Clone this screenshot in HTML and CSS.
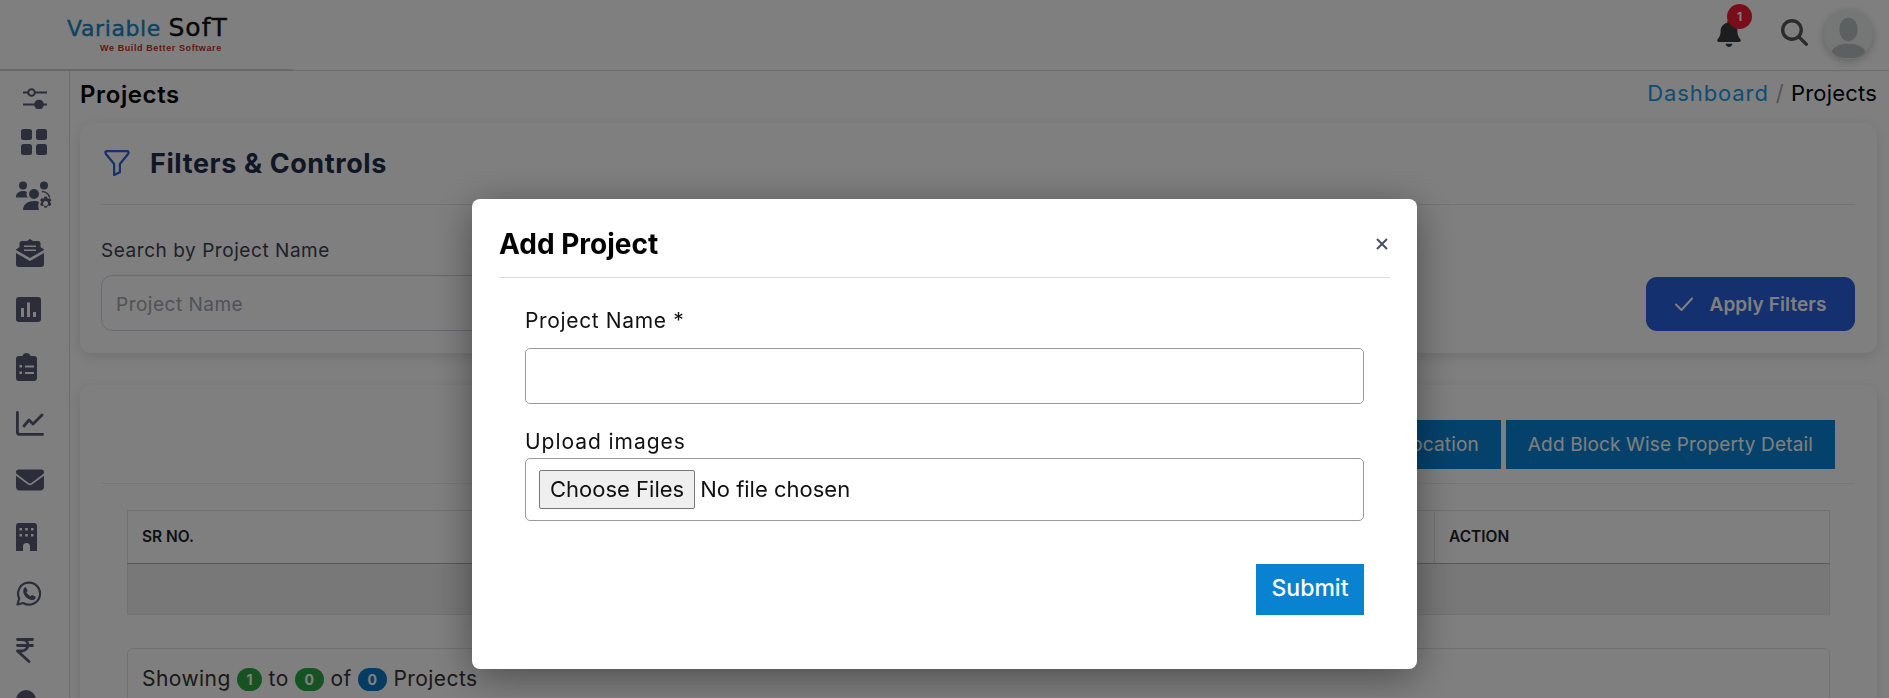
FILE: index.html
```html
<!DOCTYPE html>
<html lang="en">
<head>
<meta charset="utf-8">
<title>Projects</title>
<link rel="stylesheet" href="styles.css">
</head>
<body>
<div class="app">
  <header class="topbar">
    <div class="brand">
      <div class="logo"><span class="logo-a">Variable</span> <span class="logo-b">SofT</span></div>
      <div class="tagline">We Build Better Software</div>
    </div>
    <div class="top-actions">
      <div class="bell">
        <svg class="bell-ic" viewBox="0 0 448 512"><path d="M224 0c-17.7 0-32 14.3-32 32V51.2C119 66 64 130.6 64 208v18.8c0 47-17.3 92.4-48.5 127.6l-7.4 8.3c-8.4 9.4-10.4 22.9-5.3 34.4S19.4 416 32 416H416c12.6 0 24-7.4 29.2-18.9s3.1-25-5.3-34.4l-7.4-8.3C401.3 319.2 384 273.9 384 226.8V208c0-77.4-55-142-128-156.8V32c0-17.7-14.3-32-32-32zm45.3 493.3c12-12 18.7-28.3 18.7-45.3H224 160c0 17 6.7 33.3 18.7 45.3s28.3 18.7 45.3 18.7s33.3-6.7 45.3-18.7z"/></svg>
        <span class="bell-badge">1</span>
      </div>
      <svg class="search-ic" viewBox="0 0 512 512"><path d="M416 208c0 45.9-14.9 88.3-40 122.7L502.6 457.4c12.5 12.5 12.5 32.8 0 45.3s-32.8 12.5-45.3 0L330.7 376c-34.4 25.2-76.8 40-122.7 40C93.1 416 0 322.9 0 208S93.1 0 208 0S416 93.1 416 208zM208 352a144 144 0 1 0 0-288 144 144 0 1 0 0 288z"/></svg>
      <div class="avatar">
        <svg viewBox="0 0 48 48"><ellipse cx="24" cy="19" rx="9" ry="11.500"/><path d="M7 42c2-7 9-9 17-9s15 2 17 9c-4 4-10 5-17 5s-13-1-17-5z"/></svg>
      </div>
    </div>
  </header>

  <div class="body-row">
    <nav class="sidebar">
      <div class="nav-row nav-sliders">
        <svg class="ic-sliders" viewBox="0 0 24 21"><g fill="none"><circle cx="8.500" cy="4.500" r="3.300"/><path d="M12 4.500h12M0 4.500h5"/><path d="M0 16.500h24"/></g><circle cx="16" cy="16.500" r="4.800" class="solid"/></svg>
      </div>
      <div class="nav-row nav-grid">
        <svg class="ic-grid" viewBox="0 0 26 26"><rect width="11" height="11" rx="2.500"/><rect x="15" width="11" height="11" rx="2.500"/><rect y="15" width="11" height="11" rx="2.500"/><rect x="15" y="15" width="11" height="11" rx="2.500"/></svg>
      </div>
      <div class="nav-row">
        <svg class="ic-users" viewBox="0 0 36 30"><circle cx="7" cy="4.500" r="4"/><circle cx="28" cy="4.500" r="4"/><path d="M0 16c0-3.500 3-6 7-6 2 0 3 .5 4 1-1 2-.5 4 1 5.500H0z"/><circle cx="18" cy="13" r="5"/><path d="M7 29c0-5 4-9 11-9 3 0 4 .5 5 1-1 3-1 5 0 8H7z"/><path d="M26 10.500c3 0 7 2 7.500 6" fill="none"/><path d="M28.500 15.500l2.500.2.800 2.100 2.300-.6 1.300 2.100-1.500 1.800 1.500 1.800-1.300 2.100-2.300-.6-.8 2.100-2.500.2-.8-2.300-2.300.6-1.300-2.100 1.500-1.800-1.500-1.800 1.300-2.100 2.300.6zM29.500 20a2.500 2.500 0 1 0 .1 0z" fill-rule="evenodd"/></svg>
      </div>
      <div class="nav-row">
        <svg class="ic-mailopen" viewBox="0 0 28 28"><path d="M14 0l3 2h5a2.500 2.500 0 0 1 2.500 2.500V8L28 10.500v.5L14 19 0 11v-.5L3.500 8V4.500A2.500 2.500 0 0 1 6 2h5z M8 6.500v1.500h12V6.500z M8 10.500V12h12v-1.500z" fill-rule="evenodd"/><path d="M0 14l14 8 14-8v11a3 3 0 0 1-3 3H3a3 3 0 0 1-3-3z"/></svg>
      </div>
      <div class="nav-row">
        <svg class="ic-chart" viewBox="0 0 25 25"><path fill-rule="evenodd" d="M3 0h19a3 3 0 0 1 3 3v19a3 3 0 0 1-3 3H3a3 3 0 0 1-3-3V3a3 3 0 0 1 3-3zM5 11v9h3v-9zM11 5.500V20h3V5.500zM17 15v5h3v-5z"/></svg>
      </div>
      <div class="nav-row">
        <svg class="ic-clip" viewBox="0 0 21 28"><path fill-rule="evenodd" d="M10.500 0c2 0 3.500 1.300 4 3H18a3 3 0 0 1 3 3v19a3 3 0 0 1-3 3H3a3 3 0 0 1-3-3V6a3 3 0 0 1 3-3h3.500c.5-1.700 2-3 4-3zM9 12.500v2h9v-2zM9 19v2h9v-2zM3.500 12v2.500H6V12zM3.500 18.500V21H6v-2.500z"/></svg>
      </div>
      <div class="nav-row">
        <svg class="ic-line" viewBox="0 0 28 25"><path fill="none" stroke-linecap="round" stroke-linejoin="round" d="M1.400 1.400v19.500a2.500 2.500 0 0 0 2.500 2.500h22.700M8 15l5-6 4 4 9-9"/></svg>
      </div>
      <div class="nav-row">
        <svg class="ic-mail" viewBox="0 0 512 512"><path d="M48 64C21.500 64 0 85.500 0 112c0 15.100 7.100 29.300 19.200 38.400L236.800 313.600c11.400 8.500 27 8.500 38.400 0L492.800 150.400c12.100-9.100 19.200-23.300 19.200-38.400c0-26.500-21.500-48-48-48H48zM0 176V384c0 35.300 28.700 64 64 64H448c35.300 0 64-28.700 64-64V176L294.400 339.200c-22.800 17.100-54 17.100-76.800 0L0 176z"/></svg>
      </div>
      <div class="nav-row">
        <svg class="ic-build" viewBox="0 0 21 28"><path fill-rule="evenodd" d="M3 0h15a3 3 0 0 1 3 3v25h-7v-4.500a3.500 3.500 0 0 0-7 0V28H0V3a3 3 0 0 1 3-3zM3.500 5v2.500h2.500V5zM9.200 5v2.500h2.600V5zM15 5v2.500h2.500V5zM3.500 11v2.500h2.500V11zM9.200 11v2.500h2.600V11zM15 11v2.500h2.500V11z"/></svg>
      </div>
      <div class="nav-row">
        <svg class="ic-wa" viewBox="0 0 25 25"><path fill="none" stroke-linejoin="round" d="M1.500 23.500l1.700-6A11 11 0 1 1 7.300 22z"/><path d="M8.500 6.500l1.500-.300 1.700 3.500-1.200 1.600c.9 1.800 2.300 3.100 4 4l1.600-1.400 3.400 1.700v1.500c-.6 1.700-2.400 2.300-4.200 1.900-4.200-1-7.700-4.500-8-8.300-.1-1.800.4-3.200 1.200-4.200z"/></svg>
      </div>
      <div class="nav-row">
        <svg class="ic-rupee" viewBox="0 0 18 25"><path fill="none" stroke-linecap="round" stroke-linejoin="round" d="M1.500 1.500h15M1.500 7.500h15M6 1.500c4 0 6 2.500 6 5.500s-3 6-6 6H1.500L13 23.500"/></svg>
      </div>
      <div class="nav-row nav-last">
        <svg class="ic-last" viewBox="0 0 24 24"><circle cx="12" cy="12" r="12"/></svg>
      </div>
    </nav>

    <main class="content">
      <div class="title-row">
        <h1 class="page-title">Projects</h1>
        <div class="crumbs"><a class="crumb-link">Dashboard</a><span class="crumb-sep">/</span><span>Projects</span></div>
      </div>

      <section class="card card-filters">
        <div class="filter-head">
          <svg class="ic-funnel" viewBox="0 0 28 28"><path fill="none" stroke-linejoin="round" d="M2 2.500c0-1 .5-1.300 1.500-1.300h21c1 0 1.500.4 1.500 1.300 0 1-.5 1.600-1 2.200L17 14.500v8.500l-6 3V14.500L3 4.700c-.5-.6-1-1.200-1-2.200z"/></svg>
          <h2 class="filter-title">Filters &amp; Controls</h2>
        </div>
        <div class="filter-row">
          <div class="field">
            <label class="filter-label">Search by Project Name</label>
            <input class="filter-input" placeholder="Project Name">
          </div>
          <button class="apply-btn">
            <svg viewBox="0 0 20 16"><path fill="none" stroke-linecap="round" stroke-linejoin="round" d="M2 8.500l5.500 5.500L18 2.500"/></svg>
            Apply Filters
          </button>
        </div>
      </section>

      <section class="card card-table">
        <div class="btn-row">
          <button class="act-btn">Add Location</button>
          <button class="act-btn">Add Block Wise Property Detail</button>
        </div>
        <table class="data-table">
          <thead>
            <tr><th class="col-sr">SR NO.</th><th>PROJECT NAME</th><th class="col-action">ACTION</th></tr>
          </thead>
          <tbody>
            <tr><td colspan="3">&nbsp;</td></tr>
          </tbody>
        </table>
        <div class="showing">Showing <span class="pill pill-green pill-one">1</span> to <span class="pill pill-green">0</span> of <span class="pill pill-blue">0</span> Projects</div>
      </section>
    </main>
  </div>
</div>

<div class="backdrop">
  <div class="modal">
    <div class="modal-head">
      <h3 class="modal-title">Add Project</h3>
      <svg class="modal-close" viewBox="0 0 12 12"><path fill="none" d="M1 1l10 10M11 1L1 11"/></svg>
    </div>
    <form class="modal-form">
      <label class="form-label form-label-name">Project Name *</label>
      <input class="form-input" type="text">
      <label class="form-label form-label-upload">Upload images</label>
      <input class="form-file" type="file" multiple>
      <div class="form-actions"><button class="submit-btn" type="button">Submit</button></div>
    </form>
  </div>
</div>
</body>
</html>
```
FILE: styles.css
```css
* { box-sizing: border-box; }
html, body { margin: 0; height: 698px; overflow: hidden; }
body { font-family: Inter, "Noto Sans", sans-serif; background: #fff; color: #000; }
h1, h2, h3 { margin: 0; }
svg { display: block; flex: none; }

.app { height: 698px; overflow: hidden; display: flex; flex-direction: column; }

.topbar { height: 71px; flex: none; display: flex; justify-content: space-between; border-bottom: 1px solid #d8d8d8; }
.brand { width: 293px; height: 71px; padding: 15px 0 0 67px; border-bottom: 2px solid #d0d0d0; }
.logo { font-family: "DejaVu Sans", sans-serif; font-size: 22px; line-height: 26px; white-space: nowrap; letter-spacing: 0.6px; -webkit-text-stroke: 0.4px currentColor; }
.logo-a { color: #1b84c4; }
.logo-b { color: #111; font-size: 25px; letter-spacing: 1px; }
.tagline { font-family: "Liberation Sans", sans-serif; font-size: 9px; font-weight: 700; line-height: 10px; margin: 1px 0 0 33px; color: #c9301a; letter-spacing: 0.6px; white-space: nowrap; }

.top-actions { display: flex; align-items: flex-start; padding: 10px 16px 0 0; }
.bell { position: relative; padding-top: 10px; margin-right: 40px; }
.bell-ic { width: 24px; height: 27px; fill: #393b3f; }
.bell-badge { position: absolute; left: 10px; top: -6px; width: 25px; height: 25px; border-radius: 50%; background: #f01c32; color: #fff; font-size: 12px; font-weight: 700; display: flex; align-items: center; justify-content: center; }
.search-ic { width: 27px; height: 27px; margin: 9px 16px 0 0; fill: #585858; }
.avatar { width: 49px; height: 49px; border-radius: 50%; background: #eaeeee; overflow: hidden; box-shadow: 0 2px 8px rgba(0,0,0,.25); }
.avatar svg { width: 49px; height: 49px; fill: #b8c0c0; }

.body-row { flex: 1; display: flex; min-height: 0; }
.sidebar { width: 70px; flex: none; border-right: 1px solid #d8d8d8; padding: 0 0 0 16px; overflow: hidden; }
.nav-row { height: 56.8px; display: flex; align-items: center; }
.nav-row svg { fill: #565a74; stroke: #565a74; stroke-width: 0; }
.nav-sliders { height: 50px; padding: 5px 0 0 7px; }
.nav-grid { height: 47px; padding: 0 0 5px 5px; }
.nav-last { align-items: flex-start; padding-top: 11px; }
.ic-sliders { width: 24px; height: 21px; }
.nav-row .ic-sliders g { stroke-width: 2; }
.ic-grid { width: 26px; height: 26px; }
.ic-users { width: 36px; height: 30px; }
.ic-mailopen { width: 28px; height: 28px; }
.ic-chart { width: 25px; height: 25px; }
.ic-clip { width: 21px; height: 28px; }
.ic-line { width: 28px; height: 25px; }
.ic-mail { width: 28px; height: 28px; }
.ic-build { width: 21px; height: 28px; }
.ic-wa { width: 25px; height: 25px; }
.ic-rupee { width: 18px; height: 25px; }
.ic-last { width: 20px; height: 20px; }
.nav-row .ic-line path, .nav-row .ic-rupee path { stroke-width: 2.8; }
.nav-row .ic-wa path:first-child { stroke-width: 2.2; fill: none; }
.nav-row .ic-users path:nth-of-type(3) { stroke-width: 1.5; fill: none; }

.content { flex: 1; min-width: 0; padding: 0 12px 0 10px; }
.title-row { height: 52px; display: flex; justify-content: space-between; align-items: center; }
.page-title { font-size: 24px; font-weight: 600; color: #000; letter-spacing: 0.6px; padding-bottom: 4px; line-height: 30px; }
.crumbs { font-size: 22px; display: flex; align-items: center; color: #000; padding-bottom: 8px; letter-spacing: 0.2px; }
.crumb-link { color: #1a9be8; letter-spacing: 0.900px; }
.crumb-sep { color: #a8a8a8; margin: 0 7px; }

.card { background: #fff; border-radius: 12px; box-shadow: 0 4px 14px rgba(0,0,0,.12); }
.card-filters { height: 230px; padding: 20px 22px 0 21px; }
.filter-head { display: flex; align-items: center; height: 40px; padding-left: 2px; }
.ic-funnel { width: 28px; height: 27px; margin-right: 19px; stroke: #2c62d8; stroke-width: 2.3; }
.filter-title { font-size: 27px; font-weight: 700; color: #1f2d4a; letter-spacing: 0.6px; }
.filter-row { margin-top: 21px; padding-top: 34px; border-top: 1px solid #e8e8e8; display: flex; justify-content: space-between; align-items: flex-end; }
.field { display: flex; flex-direction: column; }
.filter-label { font-size: 19px; font-weight: 400; line-height: 24px; color: #3c4252; margin-bottom: 12px; letter-spacing: 0.55px; }
.filter-input { width: 800px; height: 56px; border: 1px solid #ccd4e0; border-radius: 11px; padding: 2px 14px 0; font: 19px Inter, sans-serif; letter-spacing: 0.5px; background: #fff; }
.filter-input::placeholder { color: #a0a6b2; }
.apply-btn { width: 209px; height: 54px; border: 0; border-radius: 11px; background: #2860de; color: #fff; font: 600 19px Inter, sans-serif; letter-spacing: 0.1px; display: flex; align-items: center; justify-content: center; gap: 15px; }
.apply-btn svg { width: 20px; height: 16px; stroke: #fff; stroke-width: 2; }

.card-table { margin-top: 32px; height: 400px; padding: 35px 22px 0 21px; }
.btn-row { display: flex; justify-content: flex-end; gap: 5px; padding: 0 20px 14px 0; border-bottom: 1px solid #ececec; }
.act-btn { height: 49px; border: 0; background: #0984d6; color: #fff; font: 400 19px Inter, sans-serif; letter-spacing: 0.15px; padding: 0 22px; white-space: nowrap; }
.data-table { width: 1703px; margin: 26px 0 0 26px; border-collapse: collapse; table-layout: fixed; }
.data-table th { height: 53px; padding: 0 14px 2px; text-align: left; font-size: 15.500px; font-weight: 600; color: #222; border: 1px solid #dee2e6; border-bottom: 1px solid #b4b4b4; }
.col-sr { width: 400px; }
.col-action { width: 395px; }
.data-table td { height: 51px; background: #f0f0f0; border: 1px solid #e4e4e4; border-top: 0; }
.showing { margin: 33px 0 0 26px; width: 1703px; height: 60px; border: 1px solid #dee2e6; border-radius: 6px; padding: 16px 14px; font-size: 21px; line-height: 28px; color: #333; letter-spacing: 0.45px; }
.pill { display: inline-block; height: 23px; min-width: 29px; padding: 0 8px; border-radius: 12px; color: #fff; font-size: 14px; font-weight: 700; line-height: 23px; text-align: center; vertical-align: 1px; }
.pill-one { min-width: 25px; }
.pill-green { background: #2fa745; }
.pill-blue { background: #0d78c4; }

.backdrop { position: fixed; inset: 0; background: rgba(0,0,0,.5); padding-top: 199px; }
.modal { width: 945px; height: 470px; margin: 0 auto; background: #fff; border-radius: 8px; padding: 0 27px; box-shadow: 0 8px 40px rgba(0,0,0,.4); }
.modal-head { height: 79px; display: flex; justify-content: space-between; align-items: center; border-bottom: 1px solid #dedede; padding: 17px 2px 5px 0; }
.modal-title { font-size: 28px; font-weight: 700; color: #000; }
.modal-close { width: 12px; height: 12px; stroke: #47505f; stroke-width: 2; }
.modal-form { display: flex; flex-direction: column; padding: 0 26px; }
.form-label { font-size: 21px; line-height: 28px; color: #111; }
.form-label-name { margin-top: 29px; margin-bottom: 13px; letter-spacing: 0.65px; }
.form-label-upload { margin-top: 24px; margin-bottom: 2px; letter-spacing: 0.95px; }
.form-input { height: 56px; border: 1px solid #9a9a9a; border-radius: 5px; background: #fff; }
.form-file { height: 63px; border: 1px solid #9a9a9a; border-radius: 5px; padding: 11px 13px; font: 22px Inter, sans-serif; color: #111; background: #fff; }
.form-file::file-selector-button { height: 39px; font: 22px Inter, sans-serif; padding: 0 10px 2px; margin-right: 5px; border: 1px solid #777; border-radius: 2px; background: #efefef; color: #111; }
.form-actions { display: flex; justify-content: flex-end; margin-top: 43px; }
.submit-btn { width: 108px; height: 51px; border: 0; background: #0a82d2; color: #fff; font: 500 23px Inter, sans-serif; padding: 0 0 3px; }
```
